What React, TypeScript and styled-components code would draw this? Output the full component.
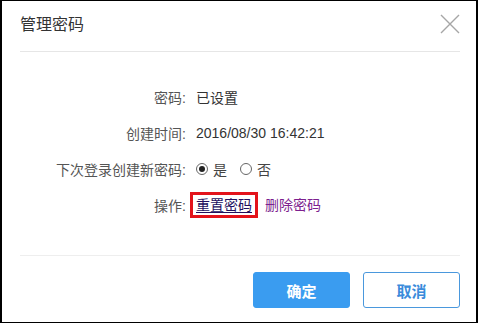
import React, { useState } from 'react';
import styled, { createGlobalStyle } from 'styled-components';

const GlobalStyle = createGlobalStyle`
	html, body {
		margin: 0;
		padding: 0;
		background: #fff;
	}
	body {
		font-family: 'Liberation Sans', 'Noto Sans CJK SC', sans-serif;
		color: #333;
	}
	* {
		box-sizing: border-box;
	}
`;

const rows = [
	{ label: '密码:', value: '已设置' },
	{ label: '创建时间:', value: '2016/08/30 16:42:21' },
];

const App = () => {
	const [renew, setRenew] = useState(true);

	return (
		<>
			<GlobalStyle />
			<Dialog>
				<Header>
					<Title>管理密码</Title>
					<CloseButton aria-label="关闭">
						<svg width="20" height="20" viewBox="0 0 20 20">
							<path d="M1 1 L19 19 M19 1 L1 19" stroke="#a6a6a6" strokeWidth="1.4" fill="none" />
						</svg>
					</CloseButton>
				</Header>
				<Body>
					{rows.map((r) => (
						<Row key={r.label}>
							<Label>{r.label}</Label>
							<Value>{r.value}</Value>
						</Row>
					))}
					<Row>
						<Label>下次登录创建新密码:</Label>
						<Value>
							<RadioOption onClick={() => setRenew(true)}>
								<RadioDot $checked={renew} />
								是
							</RadioOption>
							<RadioOption onClick={() => setRenew(false)}>
								<RadioDot $checked={!renew} />
								否
							</RadioOption>
						</Value>
					</Row>
					<Row>
						<Label>操作:</Label>
						<Value>
							<ActionLink href="#" $highlight>
								重置密码
							</ActionLink>
							<ActionLink href="#">删除密码</ActionLink>
						</Value>
					</Row>
				</Body>
				<Footer>
					<Button $primary>确定</Button>
					<Button>取消</Button>
				</Footer>
			</Dialog>
		</>
	);
};

export default App;

const Dialog = styled.div`
	width: 478px;
	height: 323px;
	display: flex;
	flex-direction: column;
	background: #fff;
	border-style: solid;
	border-color: #000;
	border-width: 1px 2px 1px 2px;
`;

const Header = styled.div`
	height: 51px;
	margin: 0 16px 0 18px;
	display: flex;
	align-items: center;
	justify-content: space-between;
	border-bottom: 1px solid #e6e6e6;
`;

const Title = styled.h2`
	margin: 0;
	font-size: 16px;
	font-weight: normal;
	color: #333;
	line-height: 20px;
	padding-bottom: 2px;
`;

const CloseButton = styled.button`
	border: 0;
	background: none;
	padding: 0;
	margin: 0 0 4px 0;
	width: 20px;
	height: 20px;
	cursor: pointer;
	display: flex;
`;

const Body = styled.div`
	padding: 27px 18px 32px 0;
	margin: 0 16px 0 18px;
	border-bottom: 1px solid #eeeeee;
	display: flex;
	flex-direction: column;
`;

const Row = styled.div`
	display: grid;
	grid-template-columns: 166px 1fr;
	column-gap: 10px;
	height: 36px;
	align-items: center;
	font-size: 14px;
`;

const Label = styled.span`
	text-align: right;
	color: #555;
	white-space: nowrap;
`;

const Value = styled.span`
	color: #333;
	display: flex;
	align-items: center;
	white-space: nowrap;
`;

const RadioOption = styled.label`
	display: inline-flex;
	align-items: center;
	gap: 5px;
	margin-right: 13px;
	cursor: pointer;
	color: #444;
`;

const RadioDot = styled.span<{ $checked?: boolean }>`
	width: 12px;
	height: 12px;
	border-radius: 50%;
	border: 1px solid #666;
	display: inline-flex;
	align-items: center;
	justify-content: center;
	&::after {
		content: '';
		width: 6px;
		height: 6px;
		border-radius: 50%;
		background: ${({ $checked }) => ($checked ? '#222' : 'transparent')};
	}
`;

const ActionLink = styled.a<{ $highlight?: boolean }>`
	position: relative;
	margin-right: 13px;
	color: ${({ $highlight }) => ($highlight ? '#22105e' : '#7d1f8f')};
	text-decoration: ${({ $highlight }) => ($highlight ? 'underline' : 'none')};
	text-underline-offset: 2px;
	line-height: 18px;
	&::after {
		content: '';
		display: ${({ $highlight }) => ($highlight ? 'block' : 'none')};
		position: absolute;
		left: -6px;
		right: -6px;
		top: -4px;
		bottom: -4px;
		border: 3px solid #e3131b;
	}
`;

const Footer = styled.div`
	flex: 1;
	display: flex;
	justify-content: flex-end;
	align-items: flex-start;
	gap: 13px;
	padding: 16px 16px 0 0;
`;

const Button = styled.button<{ $primary?: boolean }>`
	width: 97px;
	height: 36px;
	border-radius: 3px;
	font-family: 'Liberation Sans', 'Noto Sans CJK SC', sans-serif;
	font-size: 15px;
	font-weight: bold;
	cursor: pointer;
	background: ${({ $primary }) => ($primary ? '#3a9cf0' : '#fff')};
	color: ${({ $primary }) => ($primary ? '#fff' : '#3a8bdb')};
	border: 1px solid ${({ $primary }) => ($primary ? '#3a9cf0' : '#4a98dd')};
`;
